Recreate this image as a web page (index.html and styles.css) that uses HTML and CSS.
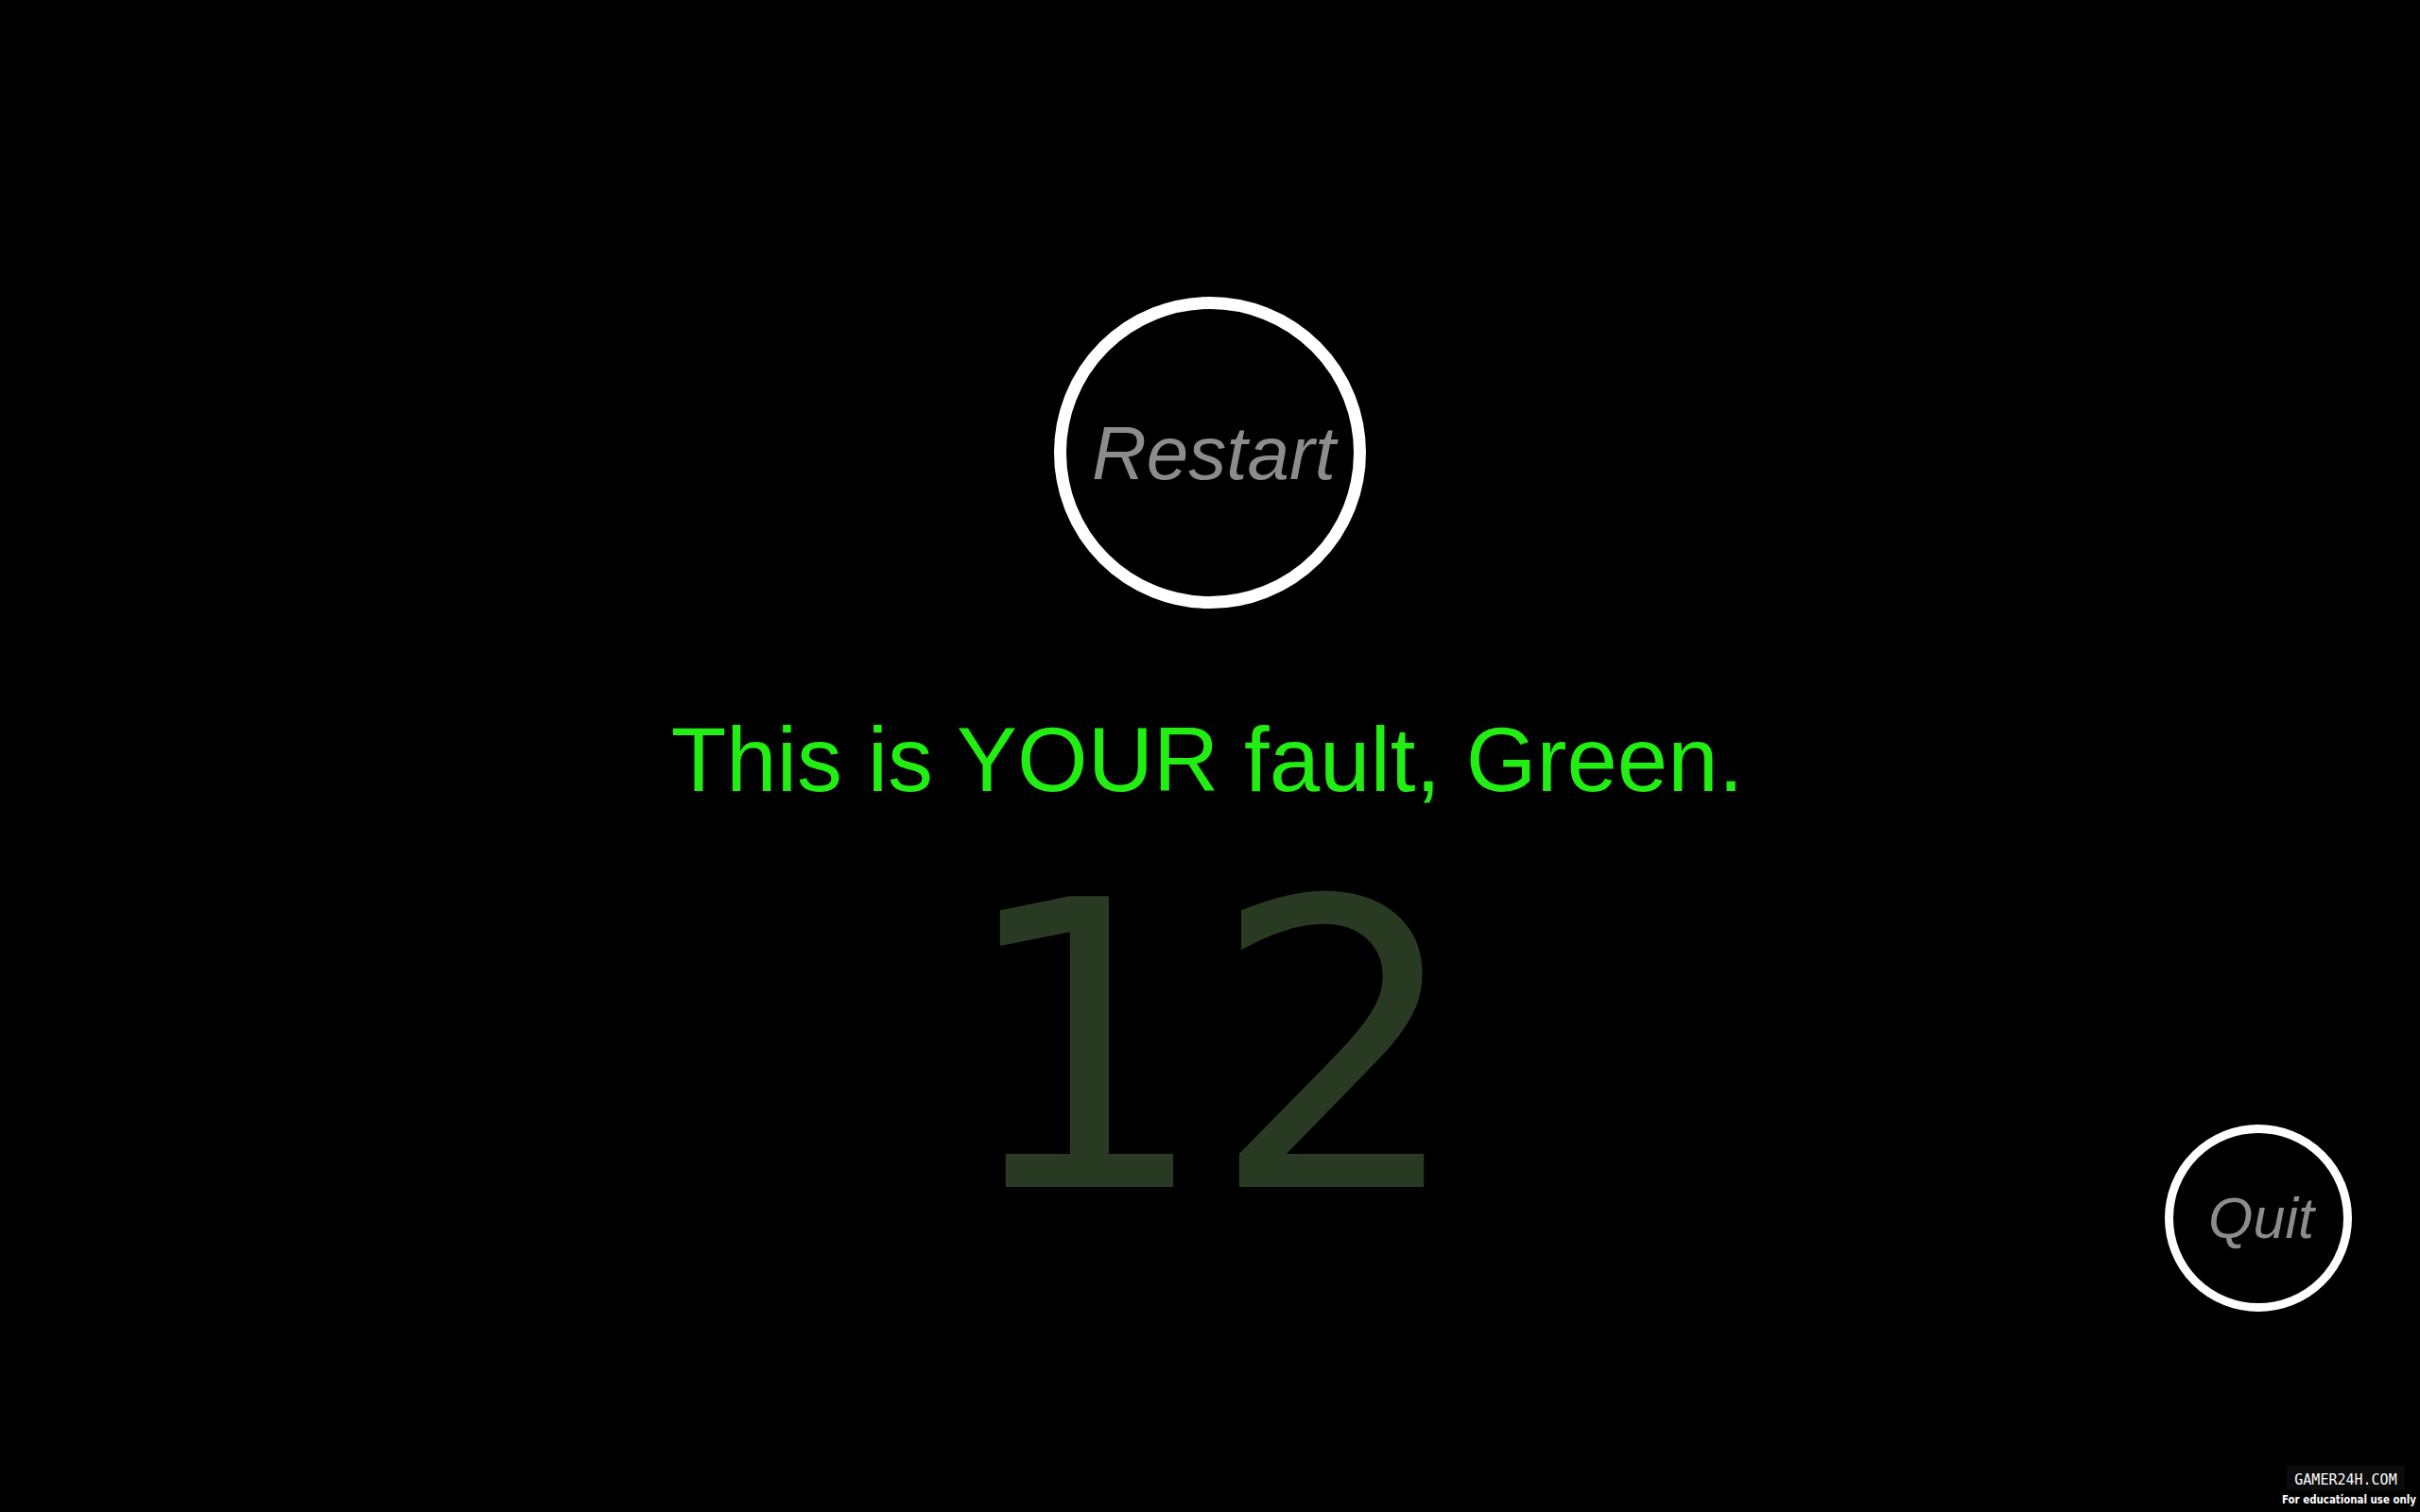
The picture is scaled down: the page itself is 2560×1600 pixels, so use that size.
FILE: index.html
```html
<!DOCTYPE html>
<html lang="en">
<head>
<meta charset="utf-8">
<title>Game Over</title>
<link rel="stylesheet" href="styles.css">
</head>
<body>
<div class="screen">
  <div class="side"></div>
  <main class="stack">
    <button class="ring ring-restart"><span class="label label-restart">Restart</span></button>
    <p class="message">This is YOUR fault, Green.</p>
    <div class="score">12</div>
  </main>
  <div class="side side-right">
    <button class="ring ring-quit"><span class="label label-quit">Quit</span></button>
  </div>
</div>
<div class="watermark">
  <div class="wm-box">GAMER24H.COM</div>
  <div class="wm-note">For educational use only</div>
</div>
</body>
</html>
```

FILE: styles.css
```css
html, body {
  margin: 0;
  padding: 0;
  background: #000;
  width: 2560px;
  height: 1600px;
  overflow: hidden;
}

.screen {
  display: grid;
  grid-template-columns: 1fr auto 1fr;
  height: 1600px;
}

.stack {
  display: flex;
  flex-direction: column;
  align-items: center;
  padding-top: 314px;
}

.side-right {
  display: flex;
  justify-content: flex-end;
  align-items: flex-start;
  padding-top: 1190px;
  padding-right: 72px;
}

.ring {
  box-sizing: border-box;
  border-radius: 50%;
  border-style: solid;
  border-color: #fff;
  background: #000;
  display: flex;
  align-items: center;
  justify-content: center;
  padding: 0;
  margin: 0;
  cursor: pointer;
  overflow: visible;
}

.ring-restart {
  width: 330px;
  height: 330px;
  border-width: 13px;
}

.ring-quit {
  width: 198px;
  height: 198px;
  border-width: 9px;
}

.label {
  font-family: "Liberation Sans", Arial, sans-serif;
  font-style: italic;
  color: #8c8c8c;
  line-height: 1;
  white-space: nowrap;
}

.label-restart {
  font-size: 80px;
  margin-left: 8px;
  margin-top: 1px;
}

.label-quit {
  font-size: 61px;
  margin-left: 6px;
  margin-top: 0;
}

.message {
  margin: 112px 0 0 0;
  font-family: "Liberation Sans", Arial, sans-serif;
  font-size: 96px;
  line-height: 1;
  color: #22ee14;
  white-space: nowrap;
  padding-right: 6px;
}

.score {
  margin-top: 47px;
  font-family: "DejaVu Sans", sans-serif;
  font-size: 422px;
  line-height: 1;
  color: #293a22;
}

.watermark {
  position: absolute;
  right: 4px;
  bottom: 5px;
  display: flex;
  flex-direction: column;
  align-items: flex-end;
  color: #fff;
}

.wm-box {
  background: #0b0b0b;
  width: 125px;
  height: 26px;
  margin-right: 12px;
  display: flex;
  align-items: center;
  justify-content: center;
  font-family: "DejaVu Sans Mono", monospace;
  font-size: 15px;
  padding-top: 4px;
  box-sizing: border-box;
}

.wm-note {
  margin-top: 3px;
  font-family: "DejaVu Sans", sans-serif;
  font-weight: bold;
  font-stretch: condensed;
  font-size: 11.4px;
  line-height: 15px;
}
```
